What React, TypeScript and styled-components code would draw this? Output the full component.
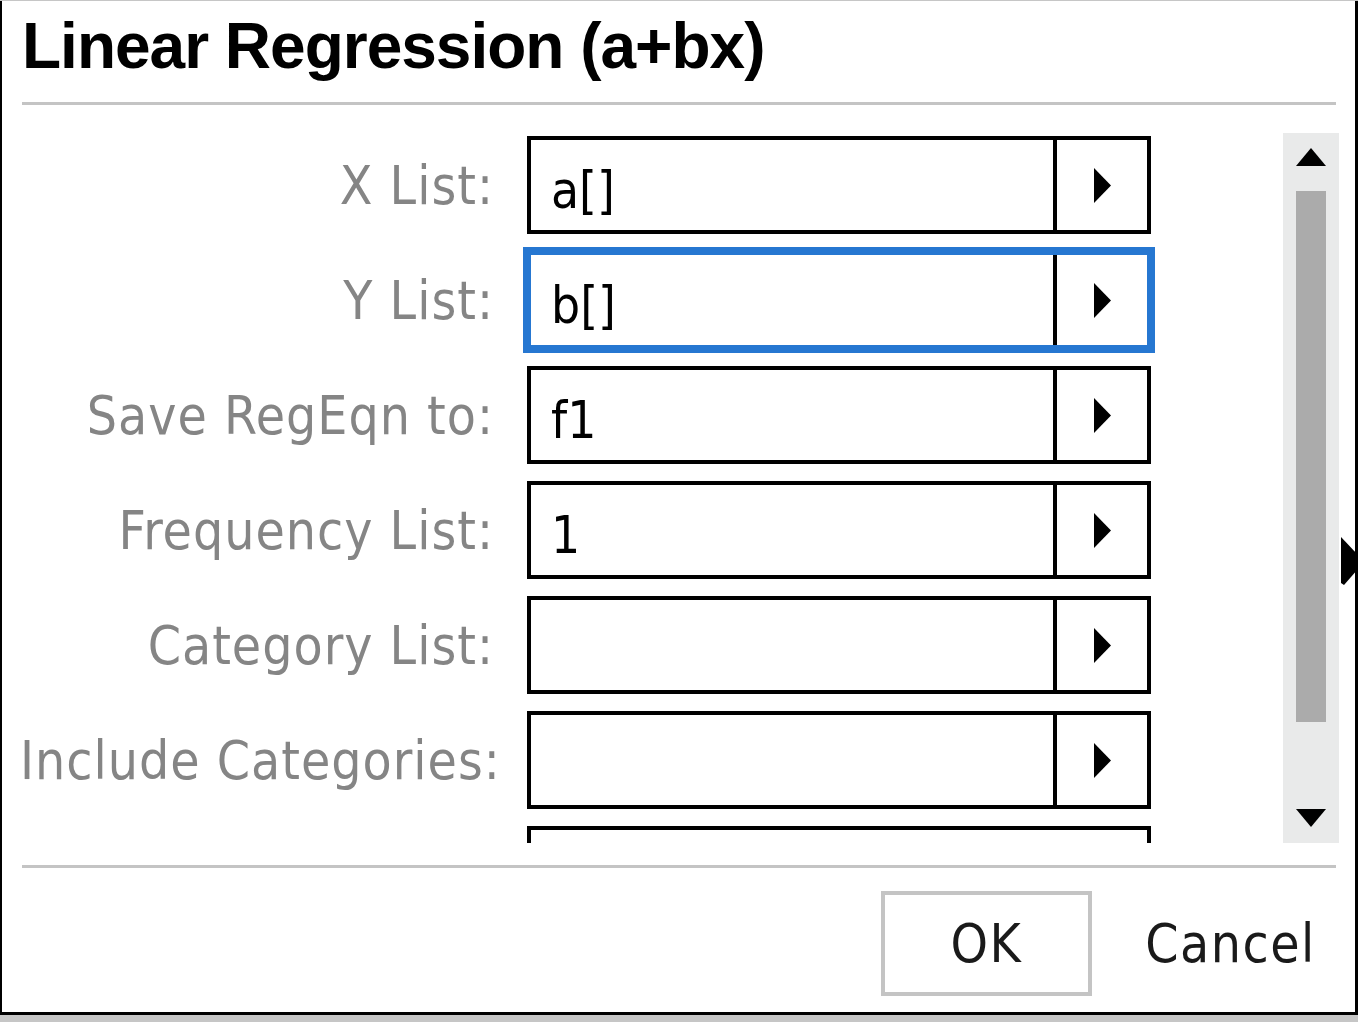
import React from "react";
import styled, { createGlobalStyle } from "styled-components";

const GlobalStyle = createGlobalStyle`
  html, body {
    margin: 0;
    padding: 0;
    background: #c6c6c6;
    width: 1358px;
    height: 1022px;
    overflow: hidden;
  }
  * { box-sizing: border-box; }
`;

const UI_FONT = `"DejaVu Sans Condensed", "DejaVu Sans", sans-serif`;

const Dialog = styled.div`
  position: relative;
  margin-top: 1px;
  width: 1358px;
  height: 1014px;
  background: #ffffff;
  border-left: 2px solid #000;
  border-right: 3px solid #000;
  border-bottom: 3px solid #000;
  display: flex;
  flex-direction: column;
`;

const Title = styled.h1`
  margin: 13px 0 0 20px;
  font-family: "Liberation Sans", Arial, sans-serif;
  font-weight: 700;
  font-size: 64px;
  line-height: 64px;
  letter-spacing: -1px;
  color: #000;
`;

const Separator = styled.div<{ $top: number }>`
  margin: ${(p) => p.$top}px 19px 0 20px;
  height: 3px;
  background: #c4c4c4;
`;

const Body = styled.div`
  margin-top: 28px;
  height: 710px;
  display: flex;
  padding: 0 16px 0 18px;
`;

const Form = styled.div`
  flex: 1;
  overflow: hidden;
  padding-top: 3px;
  display: flex;
  flex-direction: column;
  gap: 17px;
`;

const Row = styled.div`
  display: flex;
  align-items: center;
  gap: 33px;
  flex-shrink: 0;
`;

const Label = styled.div`
  width: 474px;
  text-align: right;
  font-family: ${UI_FONT};
  font-stretch: condensed;
  font-size: 53px;
  line-height: 1;
  letter-spacing: 1px;
  color: #858585;
  white-space: nowrap;
`;

const Field = styled.div<{ $focused?: boolean }>`
  width: 624px;
  height: 98px;
  flex-shrink: 0;
  display: flex;
  border: 4px solid ${(p) => (p.$focused ? "#2677d1" : "#000")};
  box-shadow: ${(p) => (p.$focused ? "0 0 0 4px #2677d1" : "none")};
  background: #fff;
`;

const FieldText = styled.div`
  flex: 1;
  display: flex;
  align-items: flex-end;
  padding: 0 0 14px 20px;
  font-family: ${UI_FONT};
  font-stretch: condensed;
  font-size: 51px;
  line-height: 1;
  color: #000;
`;

const FieldButton = styled.div`
  width: 94px;
  border-left: 4px solid #000;
  display: flex;
  align-items: center;
  justify-content: center;
`;

const Track = styled.div`
  width: 56px;
  height: 710px;
  background: #e9eaea;
  display: flex;
  flex-direction: column;
  align-items: center;
  padding: 15px 0 16px;
`;

const Thumb = styled.div`
  margin-top: 25px;
  width: 30px;
  height: 531px;
  background: #ababab;
`;

const Spacer = styled.div`
  flex: 1;
`;

const Footer = styled.div`
  margin-top: 23px;
  display: flex;
  justify-content: flex-end;
  gap: 33px;
  padding-right: 19px;
`;

const Button = styled.div<{ $bordered?: boolean }>`
  width: 211px;
  height: 105px;
  display: flex;
  align-items: center;
  justify-content: center;
  border: 4px solid ${(p) => (p.$bordered ? "#c4c4c4" : "transparent")};
  font-family: ${UI_FONT};
  font-stretch: condensed;
  font-size: 53px;
  line-height: 1;
  letter-spacing: 1.5px;
  color: #1a1a1a;
`;

const Cursor = styled.svg`
  position: absolute;
  right: -3px;
  top: 534px;
`;

const Arrow = () => (
  <svg width="17" height="35" viewBox="0 0 17 35">
    <polygon points="0,0 17,17.5 0,35" fill="#000" />
  </svg>
);

const ScrollArrow = ({ down }: { down?: boolean }) => (
  <svg width="30" height="18" viewBox="0 0 30 18">
    <polygon points={down ? "0,0 30,0 15,18" : "15,0 30,18 0,18"} fill="#000" />
  </svg>
);

type FieldDef = { label: string; value: string; focused?: boolean; partial?: boolean };

const fields: FieldDef[] = [
  { label: "X List:", value: "a[]" },
  { label: "Y List:", value: "b[]", focused: true },
  { label: "Save RegEqn to:", value: "f1" },
  { label: "Frequency List:", value: "1" },
  { label: "Category List:", value: "" },
  { label: "Include Categories:", value: "" },
  { label: "", value: "", partial: true },
];

export default function App() {
  return (
    <>
      <GlobalStyle />
      <Dialog>
        <Title>Linear Regression (a+bx)</Title>
        <Separator $top={24} />
        <Body>
          <Form>
            {fields.map((f, i) => (
              <Row key={i}>
                <Label>{f.label}</Label>
                <Field $focused={f.focused}>
                  <FieldText>{f.value}</FieldText>
                  {!f.partial && (
                    <FieldButton>
                      <Arrow />
                    </FieldButton>
                  )}
                </Field>
              </Row>
            ))}
          </Form>
          <Track>
            <ScrollArrow />
            <Thumb />
            <Spacer />
            <ScrollArrow down />
          </Track>
        </Body>
        <Separator $top={22} />
        <Footer>
          <Button $bordered>OK</Button>
          <Button>Cancel</Button>
        </Footer>
        <Cursor width="18" height="52" viewBox="0 0 18 52">
          <polygon points="1,2 18,20 18,34 4,50 1,48" fill="#000" />
        </Cursor>
      </Dialog>
    </>
  );
}
